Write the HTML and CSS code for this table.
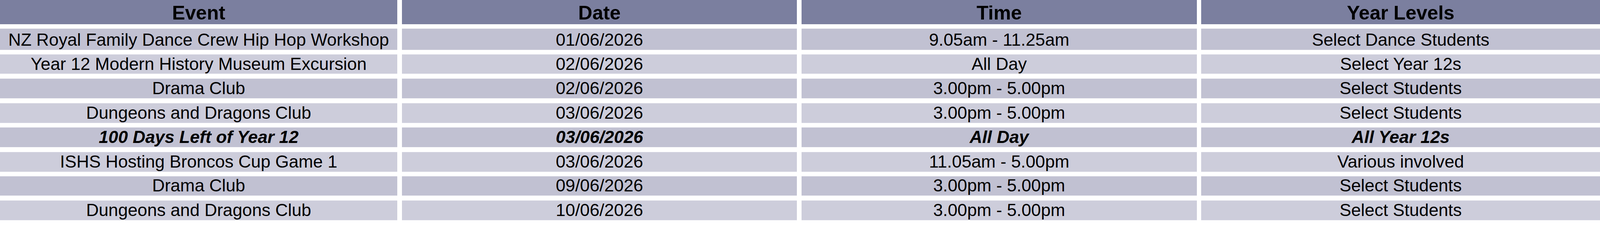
FILE: index.html
```html
<!DOCTYPE html>
<html lang="en">
<head>
<meta charset="utf-8">
<title>Events</title>
<link rel="stylesheet" href="styles.css">
</head>
<body>
<div class="table">
  <div class="cell head">Event</div>
  <div class="cell head">Date</div>
  <div class="cell head">Time</div>
  <div class="cell head">Year Levels</div>

  <div class="cell dark">NZ Royal Family Dance Crew Hip Hop Workshop</div>
  <div class="cell dark">01/06/2026</div>
  <div class="cell dark">9.05am - 11.25am</div>
  <div class="cell dark">Select Dance Students</div>

  <div class="cell light">Year 12 Modern History Museum Excursion</div>
  <div class="cell light">02/06/2026</div>
  <div class="cell light">All Day</div>
  <div class="cell light">Select Year 12s</div>

  <div class="cell dark">Drama Club</div>
  <div class="cell dark">02/06/2026</div>
  <div class="cell dark">3.00pm - 5.00pm</div>
  <div class="cell dark">Select Students</div>

  <div class="cell light">Dungeons and Dragons Club</div>
  <div class="cell light">03/06/2026</div>
  <div class="cell light">3.00pm - 5.00pm</div>
  <div class="cell light">Select Students</div>

  <div class="cell dark emph">100 Days Left of Year 12</div>
  <div class="cell dark emph">03/06/2026</div>
  <div class="cell dark emph">All Day</div>
  <div class="cell dark emph">All Year 12s</div>

  <div class="cell light">ISHS Hosting Broncos Cup Game 1</div>
  <div class="cell light">03/06/2026</div>
  <div class="cell light">11.05am - 5.00pm</div>
  <div class="cell light">Various involved</div>

  <div class="cell dark">Drama Club</div>
  <div class="cell dark">09/06/2026</div>
  <div class="cell dark">3.00pm - 5.00pm</div>
  <div class="cell dark">Select Students</div>

  <div class="cell light">Dungeons and Dragons Club</div>
  <div class="cell light">10/06/2026</div>
  <div class="cell light">3.00pm - 5.00pm</div>
  <div class="cell light">Select Students</div>
</div>
</body>
</html>
```
FILE: styles.css
```css
:root {
  --u: calc(100vw / 4583);
}

html, body {
  margin: 0;
  padding: 0;
  background: #ffffff;
  overflow: hidden;
}

body {
  width: 100vw;
  font-family: "Liberation Sans", Arial, sans-serif;
  color: #000000;
}

.table {
  display: grid;
  width: 100%;
  grid-template-columns: 1138fr 1132fr 1132fr 1142fr;
  grid-template-rows:
    calc(69 * var(--u)) calc(61 * var(--u)) calc(56 * var(--u))
    calc(57 * var(--u)) calc(57 * var(--u)) calc(57 * var(--u))
    calc(57 * var(--u)) calc(56 * var(--u)) calc(57 * var(--u));
  column-gap: calc(13 * var(--u));
  row-gap: calc(13 * var(--u));
}

.cell {
  display: flex;
  align-items: flex-end;
  justify-content: center;
  font-size: calc(50 * var(--u));
  line-height: calc(56 * var(--u));
  padding-bottom: calc(1 * var(--u));
  white-space: nowrap;
  overflow: hidden;
  box-sizing: border-box;
}

.head {
  background: #7b7f9f;
  font-weight: bold;
  font-size: calc(56 * var(--u));
  line-height: calc(62 * var(--u));
  padding-bottom: 0;
}

.dark {
  background: #c1c1d2;
  box-shadow: inset 0 1px 0 #d4d4e0, inset 0 -1px 0 #d4d4e0;
}

.light {
  background: #cdcddb;
  box-shadow: inset 0 1px 0 #dcdce6, inset 0 -1px 0 #dcdce6;
}

.emph {
  font-weight: bold;
  font-style: italic;
}
```
